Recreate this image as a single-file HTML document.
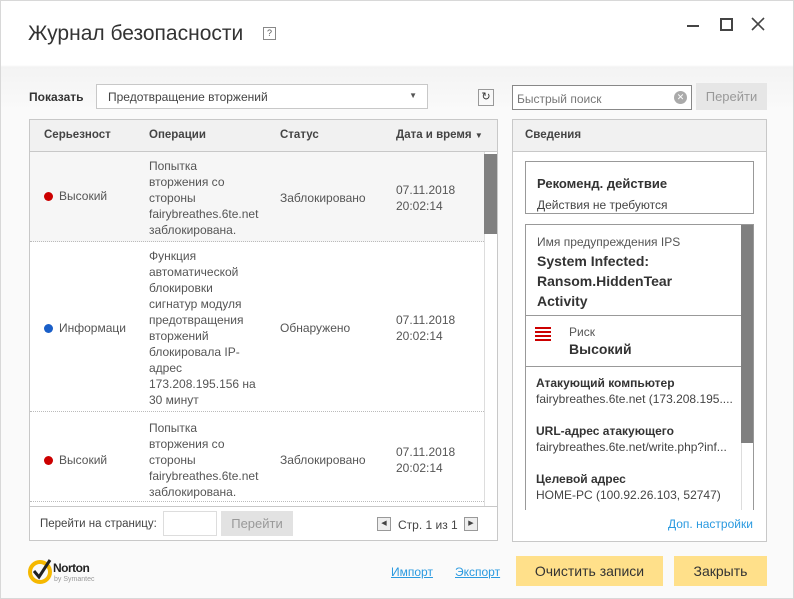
<!DOCTYPE html>
<html><head><meta charset="utf-8"><style>
*{box-sizing:border-box;margin:0;padding:0}
body{width:794px;height:599px;background:#fff;font-family:"Liberation Sans",sans-serif;color:#444;font-size:12px;position:relative;overflow:hidden}
.win{position:absolute;left:0;top:0;width:794px;height:599px;border:1px solid #d8d8d8;background:linear-gradient(#fff 0,#fff 64px,#f3f3f3 66px,#fafafa 110px,#fafafa 100%)}
.a{position:absolute}
.title{left:27px;top:21px;font-size:21px;color:#333}
.q{left:262px;top:26px;width:13px;height:13px;border:1px solid #888;font-size:9px;text-align:center;line-height:11px;color:#555}
.panel{border:1px solid #c8c8c8;background:#fff}
.hdr{background:#f1f1f1;border-bottom:1px solid #c8c8c8;height:32px;font-weight:bold;font-size:11.5px;color:#444}
.hdr span{position:absolute;top:9px}
.row{position:absolute;left:0;width:454px;border-bottom:1px dotted #bbb;font-size:12px;line-height:16px;color:#555}
.row div{position:absolute}
.dot{width:9px;height:9px;border-radius:50%;display:inline-block;margin-right:6px;vertical-align:-1px}
.btn{background:#ffe08a;text-align:center;font-size:14px;color:#333}
.link{color:#2a9ae0;text-decoration:underline;font-size:12px}
</style></head><body><div class="win">
<div class="a title">Журнал безопасности</div>
<div class="a q">?</div>
<div class="a" style="left:686px;top:24px;width:12px;height:2px;background:#444"></div>
<div class="a" style="left:719px;top:17px;width:13px;height:13px;border:2px solid #444"></div>
<svg class="a" style="left:750px;top:16px" width="14" height="14"><path d="M1 1L13 13M13 1L1 13" stroke="#444" stroke-width="1.6"/></svg>

<div class="a" style="left:28px;top:89px;font-weight:bold;font-size:12px;color:#333">Показать</div>
<div class="a" style="left:95px;top:83px;width:332px;height:25px;border:1px solid #c8c8c8;background:#fff;padding:5px 11px;font-size:12px;color:#444">Предотвращение вторжений<span style="position:absolute;right:10px;top:6px;font-size:8px;color:#555">▼</span></div>
<div class="a" style="left:477px;top:88px;width:16px;height:17px;border:1px solid #999;font-size:11px;text-align:center;line-height:15px;color:#333">↻</div>
<div class="a" style="left:511px;top:84px;width:180px;height:25px;border:1px solid #888;background:#fff;padding:6px 4px;font-size:12px;color:#777">Быстрый поиск<span style="position:absolute;right:4px;top:5px;width:13px;height:13px;border-radius:50%;background:#aaa;color:#fff;font-size:9px;text-align:center;line-height:13px">✕</span></div>
<div class="a" style="left:695px;top:82px;width:71px;height:27px;background:#e6e6e6;color:#999;font-size:13px;text-align:center;line-height:27px">Перейти</div>

<div class="a panel" style="left:28px;top:118px;width:469px;height:422px">
 <div class="a hdr" style="left:0;top:0;width:467px"><span style="left:14px">Серьезност</span><span style="left:119px">Операции</span><span style="left:250px">Статус</span><span style="left:366px">Дата и время <span style="font-size:8px;position:static">▼</span></span></div>
 <div class="row" style="top:32px;height:90px;background:#f6f6f6">
  <div style="left:14px;top:36px"><span class="dot" style="background:#c00"></span>Высокий</div>
  <div style="left:119px;top:6px">Попытка<br>вторжения со<br>стороны<br>fairybreathes.6te.net<br>заблокирована.</div>
  <div style="left:250px;top:38px">Заблокировано</div>
  <div style="left:366px;top:30px">07.11.2018<br>20:02:14</div>
 </div>
 <div class="row" style="top:122px;height:170px">
  <div style="left:14px;top:78px"><span class="dot" style="background:#1a5fc8"></span>Информаци</div>
  <div style="left:119px;top:6px">Функция<br>автоматической<br>блокировки<br>сигнатур модуля<br>предотвращения<br>вторжений<br>блокировала IP-<br>адрес<br>173.208.195.156 на<br>30 минут</div>
  <div style="left:250px;top:78px">Обнаружено</div>
  <div style="left:366px;top:70px">07.11.2018<br>20:02:14</div>
 </div>
 <div class="row" style="top:292px;height:90px">
  <div style="left:14px;top:40px"><span class="dot" style="background:#c00"></span>Высокий</div>
  <div style="left:119px;top:8px">Попытка<br>вторжения со<br>стороны<br>fairybreathes.6te.net<br>заблокирована.</div>
  <div style="left:250px;top:40px">Заблокировано</div>
  <div style="left:366px;top:32px">07.11.2018<br>20:02:14</div>
 </div>
 <div class="a" style="left:454px;top:32px;width:13px;height:354px;background:#fff;border-left:1px solid #ddd"></div>
 <div class="a" style="left:454px;top:34px;width:13px;height:80px;background:#808080"></div>
 <div class="a" style="left:0;top:386px;width:467px;height:34px;border-top:1px solid #c8c8c8;background:#fff">
  <div class="a" style="left:10px;top:11px;font-size:11.5px">Перейти на страницу:</div>
  <div class="a" style="left:133px;top:4px;width:54px;height:25px;border:1px solid #ddd"></div>
  <div class="a" style="left:191px;top:4px;width:72px;height:25px;background:#e2e2e2;color:#999;font-size:13px;text-align:center;line-height:25px">Перейти</div>
  <div class="a" style="left:347px;top:10px;width:14px;height:14px;border:1px solid #999;background:#eee;font-size:7px;text-align:center;line-height:12px">◀</div>
  <div class="a" style="left:368px;top:11px;font-size:12px">Стр. 1 из 1</div>
  <div class="a" style="left:434px;top:10px;width:14px;height:14px;border:1px solid #999;background:#eee;font-size:7px;text-align:center;line-height:12px">▶</div>
 </div>
</div>

<div class="a panel" style="left:511px;top:118px;width:255px;height:423px">
 <div class="a hdr" style="left:0;top:0;width:253px"><span style="left:12px">Сведения</span></div>
 <div class="a" style="left:12px;top:41px;width:229px;height:53px;border:1px solid #999">
  <div class="a" style="left:11px;top:14px;font-weight:bold;font-size:13px;color:#333">Рекоменд. действие</div>
  <div class="a" style="left:11px;top:36px;font-size:12px">Действия не требуются</div>
 </div>
 <div class="a" style="left:12px;top:104px;width:229px;height:286px;border:1px solid #999;border-bottom:none;overflow:hidden">
  <div class="a" style="left:215px;top:0;width:14px;height:286px;background:#fff;border-left:1px solid #ddd"></div>
  <div class="a" style="left:215px;top:0;width:14px;height:218px;background:#808080"></div>
  <div class="a" style="left:11px;top:10px;font-size:12px;color:#555">Имя предупреждения IPS</div>
  <div class="a" style="left:11px;top:26px;font-weight:bold;font-size:14px;line-height:20px;color:#333">System Infected:<br>Ransom.HiddenTear<br>Activity</div>
  <div class="a" style="left:0;top:90px;width:215px;border-top:1px solid #999"></div>
  <div class="a" style="left:9px;top:102px;width:16px;height:15px;background:repeating-linear-gradient(#c00 0,#c00 2px,#fff 2px,#fff 4px)"></div>
  <div class="a" style="left:43px;top:100px;font-size:12px;color:#555">Риск</div>
  <div class="a" style="left:43px;top:116px;font-weight:bold;font-size:14px;color:#333">Высокий</div>
  <div class="a" style="left:0;top:141px;width:215px;border-top:1px solid #999"></div>
  <div class="a" style="left:10px;top:150px;font-size:12px;line-height:16px;width:200px;white-space:nowrap"><b style="color:#333">Атакующий компьютер</b><br>fairybreathes.6te.net (173.208.195....<br><br style="line-height:14px"><b style="color:#333">URL-адрес атакующего</b><br>fairybreathes.6te.net/write.php?inf...<br><br style="line-height:14px"><b style="color:#333">Целевой адрес</b><br>HOME-PC (100.92.26.103, 52747)</div>
 </div>
 <div class="a link" style="left:155px;top:397px;text-decoration:none">Доп. настройки</div>
</div>

<svg class="a" style="left:27px;top:556px" width="30" height="28" viewBox="0 0 30 28"><circle cx="12" cy="15" r="10" fill="none" stroke="#f5b800" stroke-width="4"/><path d="M6 14 L11 20 L22 3" fill="none" stroke="#222" stroke-width="3"/></svg>
<div class="a" style="left:52px;top:560px;font-weight:bold;font-size:12px;color:#222;letter-spacing:-0.5px">Norton</div>
<div class="a" style="left:53px;top:575px;font-size:7px;color:#999">by Symantec</div>
<div class="a link" style="left:390px;top:564px">Импорт</div>
<div class="a link" style="left:454px;top:564px">Экспорт</div>
<div class="a btn" style="left:515px;top:555px;width:147px;height:30px;line-height:30px">Очистить записи</div>
<div class="a btn" style="left:673px;top:555px;width:93px;height:30px;line-height:30px">Закрыть</div>
</div></body></html>
